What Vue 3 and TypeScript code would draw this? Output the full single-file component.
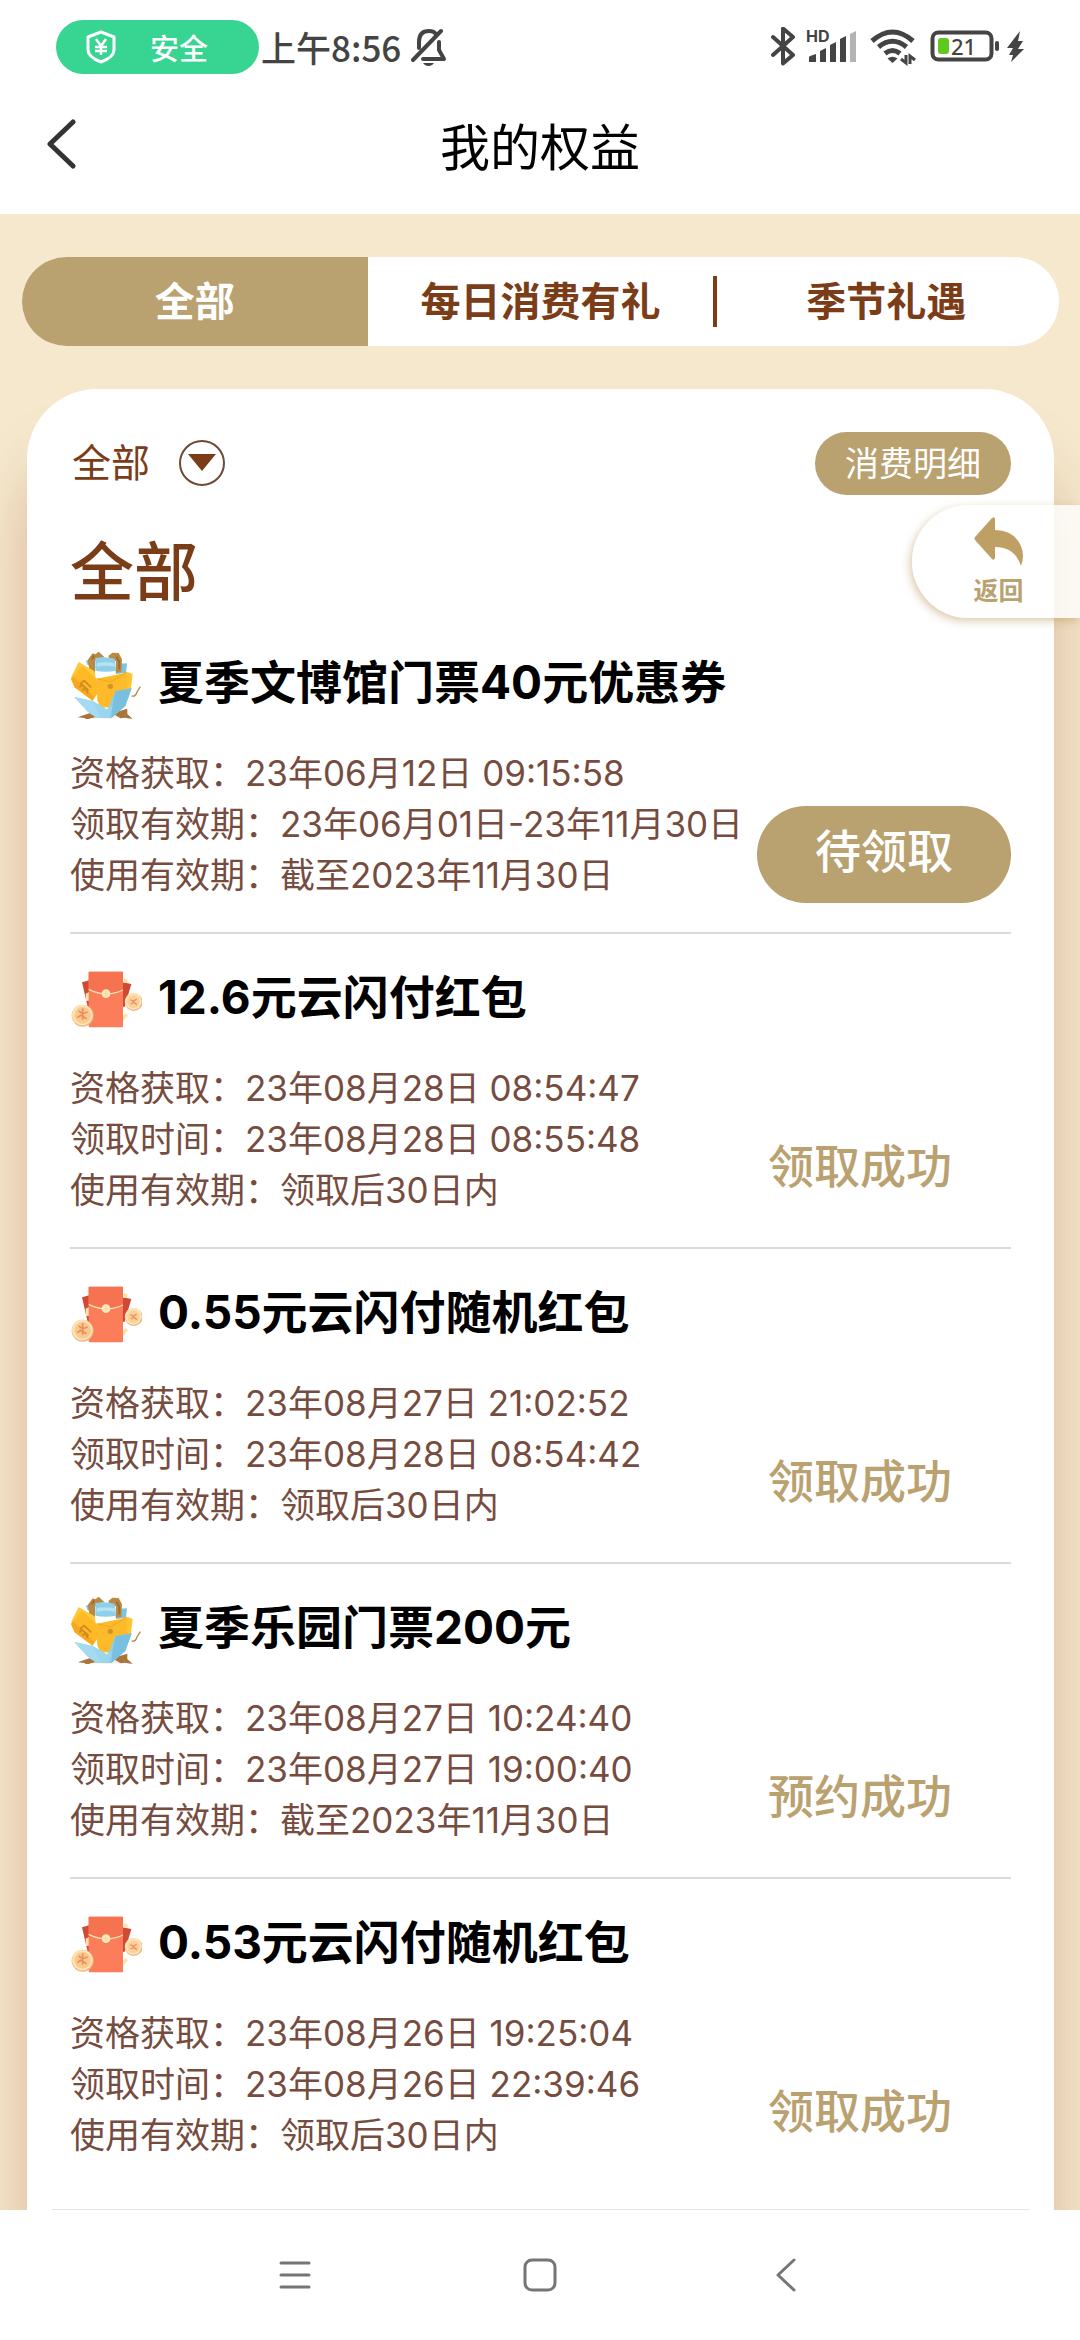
<script setup lang="ts">
import { ref } from 'vue'

type Kind = 'gift' | 'packet'

interface Benefit {
  kind: Kind
  title: string
  lines: string[]
  status: string
  claimable?: boolean
}

const tabs = ['全部', '每日消费有礼', '季节礼遇']
const activeTab = ref(0)
const filter = ref('全部')

const benefits: Benefit[] = [
  {
    kind: 'gift',
    title: '夏季文博馆门票40元优惠券',
    lines: [
      '资格获取：23年06月12日 09:15:58',
      '领取有效期：23年06月01日-23年11月30日',
      '使用有效期：截至2023年11月30日',
    ],
    status: '待领取',
    claimable: true,
  },
  {
    kind: 'packet',
    title: '12.6元云闪付红包',
    lines: [
      '资格获取：23年08月28日 08:54:47',
      '领取时间：23年08月28日 08:55:48',
      '使用有效期：领取后30日内',
    ],
    status: '领取成功',
  },
  {
    kind: 'packet',
    title: '0.55元云闪付随机红包',
    lines: [
      '资格获取：23年08月27日 21:02:52',
      '领取时间：23年08月28日 08:54:42',
      '使用有效期：领取后30日内',
    ],
    status: '领取成功',
  },
  {
    kind: 'gift',
    title: '夏季乐园门票200元',
    lines: [
      '资格获取：23年08月27日 10:24:40',
      '领取时间：23年08月27日 19:00:40',
      '使用有效期：截至2023年11月30日',
    ],
    status: '预约成功',
  },
  {
    kind: 'packet',
    title: '0.53元云闪付随机红包',
    lines: [
      '资格获取：23年08月26日 19:25:04',
      '领取时间：23年08月26日 22:39:46',
      '使用有效期：领取后30日内',
    ],
    status: '领取成功',
  },
]
</script>

<template>
  <div class="screen">
    <div class="status-bar">
      <div class="status-left">
        <div class="safe-pill">
          <svg width="30" height="34" viewBox="0 0 30 34" fill="none" stroke="#fff" stroke-width="3" stroke-linejoin="round">
            <path d="M15 2 28 7V20Q28 27 15 32Q2 27 2 20V7Z" />
            <path d="M10 9 15 16 20 9M15 16V25M9 17H21M9 21H21" stroke-width="2.500" />
          </svg>
          <span>安全</span>
        </div>
        <span class="clock">上午8:56</span>
        <svg width="36" height="38" viewBox="0 0 36 38" fill="none" stroke="#444" stroke-width="4" stroke-linecap="round" stroke-linejoin="round">
          <path d="M2 32 30 3" />
          <path d="M8 20V14Q8 3 18 3Q23 3 25 6M28 14V22L33 31H12" />
          <path d="M12 35H23Q21 38 17.500 38Q14 38 12 35Z" fill="#444" stroke="none" />
        </svg>
      </div>
      <div class="status-right">
        <svg width="254" height="40" viewBox="771 28 254 40" fill="none" stroke="#444">
          <path d="M773 38 793 56 783 64.500V29.500L793 38 773 56" stroke-width="4" stroke-linecap="round" stroke-linejoin="round" />
          <text x="806" y="43" class="hd">HD</text>
          <g fill="#444" stroke="none">
            <path d="M809 63V58Q809 57 816 55V63Z" />
            <path d="M820 63V52L826 49V63Z" />
            <path d="M830 63V46L836 43V63Z" />
            <path d="M840 63V40L846 37V63Z" />
            <path d="M850 63V35L856 32V63Z" fill="#b3b3b3" />
          </g>
          <path d="M872 42Q892.500 24 913 42M878.500 48Q892.500 36.500 906.500 48M885 54.500Q892.500 48.500 900 54.500" stroke-width="5" />
          <path d="M887.500 59.500Q892.500 56 897.500 59.500L892.500 64Z" fill="#444" stroke="none" />
          <path d="M906 56V64L901 60M910 65V57L915 61" stroke-width="3" />
          <rect x="932.500" y="33.500" width="59" height="27" rx="6" stroke-width="4" />
          <rect x="938" y="39" width="11" height="16" rx="3" fill="#5fc91e" stroke="none" />
          <rect x="995" y="42" width="4" height="10" rx="2" fill="#444" stroke="none" />
          <text x="951" y="56" class="level">21</text>
          <path d="M1020 32 1007 49H1013L1009 56H1013L1011 63 1024 50H1018L1023 42H1018Z" fill="#444" stroke="none" />
        </svg>
      </div>
    </div>

    <header class="title-bar">
      <button class="back" type="button" aria-label="返回上一页">
        <svg width="30" height="50" viewBox="0 0 30 50" fill="none" stroke="#333" stroke-width="5" stroke-linecap="round" stroke-linejoin="round">
          <path d="M27 3 4 25 27 47" />
        </svg>
      </button>
      <h1>我的权益</h1>
    </header>

    <main class="content">
      <nav class="tabs">
        <button
          v-for="(tab, i) in tabs"
          :key="tab"
          type="button"
          class="tab"
          :class="{ active: i === activeTab, divided: i > 1 }"
          @click="activeTab = i"
        >{{ tab }}</button>
      </nav>

      <section class="card">
        <div class="card-body">
          <div class="filter-row">
            <label class="filter">
              <select v-model="filter" aria-label="筛选">
                <option>全部</option>
              </select>
              <svg width="46" height="46" viewBox="0 0 46 46">
                <circle cx="23" cy="23" r="22" fill="none" stroke="#6f4a35" stroke-width="2" />
                <path d="M9 14H37L23 31Z" fill="#7b3d17" />
              </svg>
            </label>
            <button class="detail" type="button">消费明细</button>
          </div>

          <h2>全部</h2>

          <ul class="list">
            <li v-for="item in benefits" :key="item.title" class="item">
              <div class="item-head">
                <svg v-if="item.kind === 'gift'" class="icon" viewBox="12 3 216 216">
                  <ellipse cx="120" cy="213" rx="60" ry="5" fill="#f8efe6" />
                  <path d="M35 214 70 202 96 212 74 217 62 222 56 216ZM138 202 184 188 184 204 200 219 176 215 164 217Z" fill="#a9753a" />
                  <path d="M150 54 183 52 180 80 150 84ZM60 44 82 38 88 66 64 56Z" fill="#7cc4e0" />
                  <path d="M65 42 80 22 88 25 98 17 116 34 98 37 87 46V80L71 74ZM127 30 139 20 158 21 168 40 166 79 149 80 150 46 130 38Z" fill="#b98a45" />
                  <path d="M78 40 84 28M152 32 160 48V70" fill="none" stroke="#9a6b2c" stroke-width="5" />
                  <path d="M88 36Q118 30 146 38L150 74Q118 80 88 74Z" fill="#8ed0e9" />
                  <path d="M92 52Q118 46 146 52V62Q118 56 92 62Z" fill="#b5e3f3" />
                  <path d="M15 94 38 48 86 76 90 104 40 84Z" fill="#ffc93c" />
                  <path d="M15 98 48 59 92 100 96 140 80 164 26 124Z" fill="#fdb926" />
                  <path d="M15 98 21 91 84 152 80 164 26 124Z" fill="#f9a81d" />
                  <path d="M42 114 54 104 76 124M40 124 48 116 68 134M50 134 58 126 66 142" fill="none" stroke="#cf8a22" stroke-width="5" />
                  <path d="M178 76 200 84 194 134 178 140Z" fill="#ffc42f" />
                  <path d="M92 98 180 80 186 132 160 186 104 184 94 164Z" fill="#fdbb2b" />
                  <path d="M92 98 134 108 180 80" fill="none" stroke="#f2a61c" stroke-width="3" />
                  <circle cx="133" cy="121" r="8" fill="#d09526" />
                  <path d="M25 153 80 165 122 198 148 136 197 127 178 180 136 216 92 216 64 196Z" fill="#8fcfe9" />
                  <path d="M25 153 80 165 122 198 112 214 92 216 64 196Z" fill="#a5dbf0" />
                  <path d="M148 136 197 127 178 180 136 216 140 176Z" fill="#79bfe0" />
                  <path d="M80 165 104 178 122 190 140 178 128 216H104Z" fill="#9ad6ee" />
                  <path d="M197 150Q209 153 213 138L223 122" fill="none" stroke="#b28a50" stroke-width="4" />
                </svg>
                <svg v-else class="icon" viewBox="30 21 216 216">
                  <path d="M66 82 90 75 101 164 83 155ZM188 82 214 87 194 155 181 157Z" fill="#cf4933" />
                  <path d="M191 70 203 72 202 83 191 84ZM77 116 88 110 90 137 78 138ZM181 188 198 174 204 181 190 197Z" fill="#ffe2ad" />
                  <rect x="86" y="50" width="103" height="167" rx="3" fill="#fb7d5a" />
                  <path d="M86 50H189V103Q139 132 86 101Z" fill="#f67352" />
                  <path d="M86 103Q138 129 189 105" fill="none" stroke="#ffdfb1" stroke-width="4" />
                  <circle cx="138" cy="116" r="13" fill="#ffe9bc" />
                  <path d="M138 109V123M132 116H144" stroke="#ffd38a" stroke-width="3" />
                  <circle cx="68" cy="182" r="33" fill="#e8b98c" />
                  <circle cx="67" cy="180" r="31" fill="#ffe4b3" />
                  <circle cx="68" cy="181" r="25" fill="#fbc88e" />
                  <path d="M52 188 62 181 80 191M56 168 68 176 83 171M68 160V194" fill="none" stroke="#e9915e" stroke-width="5" />
                  <circle cx="221" cy="141" r="27" fill="#e8b98c" />
                  <circle cx="220" cy="139" r="25" fill="#ffe4b3" />
                  <circle cx="221" cy="140" r="19" fill="#fbd09b" />
                  <path d="M211 134 220 139 230 132M212 147 221 142 231 149" fill="none" stroke="#e9915e" stroke-width="4" />
                </svg>
                <h3>{{ item.title }}</h3>
              </div>
              <div class="item-body">
                <div class="lines">
                  <p v-for="line in item.lines" :key="line">{{ line }}</p>
                </div>
                <button v-if="item.claimable" class="claim" type="button">{{ item.status }}</button>
                <span v-else class="state">{{ item.status }}</span>
              </div>
            </li>
          </ul>
        </div>
      </section>

      <button class="float-back" type="button">
        <svg width="50" height="50" viewBox="0 0 50 50" fill="#bea064">
          <path d="M1 20 18 1Q21 -1 21 2V13Q40 13 47 29Q51 39 47 49Q41 30 21 30V41Q20 44 18 42L1 23Q0 21 1 20Z" />
        </svg>
        <span>返回</span>
      </button>
    </main>

    <nav class="system-nav">
      <button type="button" aria-label="最近任务">
        <svg width="34" height="34" viewBox="0 0 34 34" stroke="#757575" stroke-width="3" stroke-linecap="round">
          <path d="M3 5H31M3 17H31M3 29H31" />
        </svg>
      </button>
      <button type="button" aria-label="主屏幕">
        <svg width="34" height="34" viewBox="0 0 34 34" fill="none" stroke="#757575" stroke-width="3">
          <rect x="2" y="2" width="30" height="30" rx="7" />
        </svg>
      </button>
      <button type="button" aria-label="后退">
        <svg width="34" height="34" viewBox="0 0 34 34" fill="none" stroke="#757575" stroke-width="3" stroke-linecap="round" stroke-linejoin="round">
          <path d="M26 2 10 17 26 32" />
        </svg>
      </button>
    </nav>
  </div>
</template>

<style>
body {
  margin: 0;
  background: #fff;
}
</style>

<style scoped>
* {
  box-sizing: border-box;
}

.screen {
  display: flex;
  flex-direction: column;
  min-height: 100vh;
  font-family: Inter, 'Noto Sans CJK SC', sans-serif;
  color: #7b3d17;
  background: #fff;
}

button,
select {
  margin: 0;
  padding: 0;
  border: 0;
  background: none;
  font: inherit;
  color: inherit;
}

svg {
  display: block;
  flex: none;
}

h1,
h2,
h3,
p,
ul {
  margin: 0;
  padding: 0;
  font-weight: 400;
}

.status-bar {
  display: flex;
  align-items: center;
  justify-content: space-between;
  height: 80px;
  padding: 14px 55px 0 56px;
  color: #444;
}

.status-left {
  display: flex;
  align-items: center;
}

.safe-pill {
  display: flex;
  align-items: center;
  gap: 34px;
  width: 203px;
  height: 54px;
  padding-left: 30px;
  border-radius: 27px;
  background: #37d492;
  color: #fff;
  font-size: 29px;
  font-weight: 500;
}

.clock {
  margin: 0 10px 0 2px;
  padding-bottom: 2px;
  font-family: 'Noto Sans CJK SC', sans-serif;
  font-size: 35px;
  font-weight: 500;
}

.hd {
  font-family: Inter, sans-serif;
  font-size: 16px;
  font-weight: 700;
  fill: #444;
  stroke: none;
}

.level {
  font-family: 'Noto Sans', sans-serif;
  font-size: 22px;
  font-weight: 500;
  fill: #444;
  stroke: none;
}

.title-bar {
  display: grid;
  grid-template-columns: 1fr auto 1fr;
  align-items: center;
  height: 134px;
  padding: 0 46px 6px;
  color: #000;
}

.back {
  justify-self: start;
}

.title-bar h1 {
  font-size: 50px;
}

.content {
  position: relative;
  display: flex;
  flex: 1;
  flex-direction: column;
  gap: 43px;
  padding-top: 43px;
  overflow: hidden;
  background: #f5e8cd;
}

.tabs {
  display: flex;
  height: 89px;
  margin: 0 21px 0 22px;
  border-radius: 45px;
  overflow: hidden;
  background: #fff;
}

.tab {
  position: relative;
  flex: 1;
  padding-bottom: 6px;
  font-size: 40px;
  font-weight: 700;
}

.tab.active {
  background: #b9a170;
  color: #fff;
}

.tab.divided::before {
  content: '';
  position: absolute;
  left: 0;
  top: 19px;
  bottom: 19px;
  width: 4px;
  background: #7b3d17;
}

.card {
  display: flex;
  flex: 1;
  flex-direction: column;
  justify-content: space-between;
  margin: 0 26px 0 27px;
  padding: 43px 25px 0;
  border-radius: 70px 70px 0 0;
  background: #fff;
  box-shadow: 0 70px 60px rgba(180, 107, 72, 0.4);
}

.card::after {
  content: '';
  height: 1px;
  margin-top: 15px;
  background: #e4e4e4;
}

.card-body {
  padding: 0 18px;
}

.filter-row {
  display: flex;
  align-items: center;
  justify-content: space-between;
  height: 63px;
}

.filter {
  display: flex;
  align-items: center;
  gap: 28px;
  padding: 0 0 2px 2px;
}

.filter select {
  appearance: none;
  font-size: 39px;
}

.detail {
  width: 196px;
  height: 63px;
  padding-bottom: 4px;
  border-radius: 32px;
  background: #b9a170;
  color: #fff;
  font-size: 34px;
}

h2 {
  margin: 32px 0 2px;
  font-size: 64px;
  font-weight: 500;
  line-height: 90px;
}

.list {
  list-style: none;
}

.item {
  padding: 26px 0 29px;
  border-bottom: 2px solid #dadada;
}

.item:last-child {
  border-bottom-color: transparent;
}

.item-head {
  display: flex;
  align-items: center;
  gap: 16px;
  height: 76px;
  color: #000;
}

.icon {
  width: 72px;
  height: 72px;
}

h3 {
  padding-bottom: 8px;
  font-size: 46px;
  font-weight: 700;
  white-space: nowrap;
}

.item-body {
  display: flex;
  align-items: flex-end;
  justify-content: space-between;
  height: 155px;
  margin-top: 27px;
}

.lines {
  align-self: flex-start;
  color: #764c3f;
  font-size: 35px;
  line-height: 51px;
  white-space: nowrap;
}

.claim,
.state {
  flex: none;
  height: 97px;
  font-size: 46px;
  line-height: 91px;
}

.claim {
  width: 254px;
  padding-bottom: 6px;
  border-radius: 49px;
  background: #b9a170;
  color: #fff;
  font-weight: 500;
}

.state {
  padding-right: 59px;
  color: #b9a170;
  font-weight: 500;
}

.float-back {
  position: absolute;
  top: 291px;
  right: 0;
  display: flex;
  flex-direction: column;
  align-items: center;
  gap: 8px;
  width: 168px;
  height: 113px;
  padding: 12px 0 0 5px;
  border-radius: 57px 0 0 57px;
  background: rgba(255, 255, 255, 0.8);
  box-shadow: -2px 3px 8px rgba(185, 150, 90, 0.5);
  color: #b9a170;
  font-size: 25px;
  font-weight: 700;
  line-height: 32px;
}

.system-nav {
  display: flex;
  height: 130px;
  padding: 0 16%;
  background: #fff;
}

.system-nav button {
  display: flex;
  flex: 1;
  align-items: center;
  justify-content: center;
}
</style>
